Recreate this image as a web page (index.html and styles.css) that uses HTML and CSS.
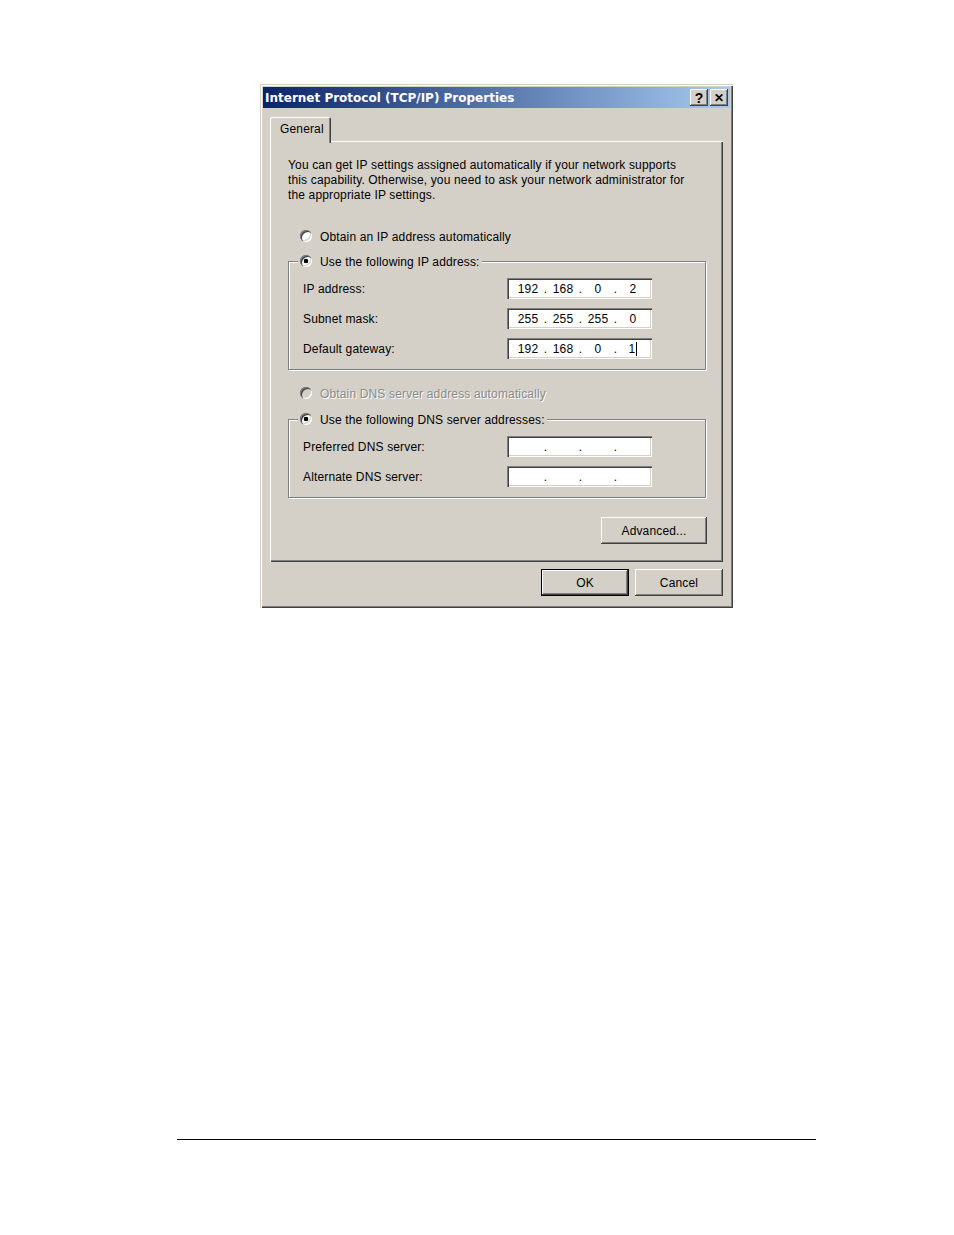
FILE: index.html
```html
<!DOCTYPE html>
<html>
<head>
<meta charset="utf-8">
<link rel="stylesheet" href="styles.css">
</head>
<body>
<div class="page">
  <div class="dialog">
    <div class="titlebar">
      <span class="title">Internet Protocol (TCP/IP) Properties</span>
      <div class="tbtns">
        <span class="tbtn">?</span>
        <span class="tbtn tclose">&#x2715;</span>
      </div>
    </div>
    <div class="body">
      <div class="tabs"><span class="tab">General</span></div>
      <div class="panel">
        <p class="intro">You can get IP settings assigned automatically if your network supports this capability. Otherwise, you need to ask your network administrator for the appropriate IP settings.</p>
        <div class="radiorow r1"><span class="radio"></span><span class="rtext">Obtain an IP address automatically</span></div>
        <fieldset class="group g1">
          <legend><span class="radiorow"><span class="radio on"></span><span class="rtext">Use the following IP address:</span></span></legend>
          <div class="row"><span class="lbl">IP address:</span><span class="ipbox"><span class="oct">192</span><span class="dot">.</span><span class="oct">168</span><span class="dot">.</span><span class="oct">0</span><span class="dot">.</span><span class="oct">2</span></span></div>
          <div class="row"><span class="lbl">Subnet mask:</span><span class="ipbox"><span class="oct">255</span><span class="dot">.</span><span class="oct">255</span><span class="dot">.</span><span class="oct">255</span><span class="dot">.</span><span class="oct">0</span></span></div>
          <div class="row"><span class="lbl">Default gateway:</span><span class="ipbox"><span class="oct">192</span><span class="dot">.</span><span class="oct">168</span><span class="dot">.</span><span class="oct">0</span><span class="dot">.</span><span class="oct">1<span class="caret"></span></span></span></div>
        </fieldset>
        <div class="radiorow r3 disabled"><span class="radio dis"></span><span class="rtext">Obtain DNS server address automatically</span></div>
        <fieldset class="group g2">
          <legend><span class="radiorow"><span class="radio on"></span><span class="rtext">Use the following DNS server addresses:</span></span></legend>
          <div class="row"><span class="lbl">Preferred DNS server:</span><span class="ipbox"><span class="oct"></span><span class="dot">.</span><span class="oct"></span><span class="dot">.</span><span class="oct"></span><span class="dot">.</span><span class="oct"></span></span></div>
          <div class="row"><span class="lbl">Alternate DNS server:</span><span class="ipbox"><span class="oct"></span><span class="dot">.</span><span class="oct"></span><span class="dot">.</span><span class="oct"></span><span class="dot">.</span><span class="oct"></span></span></div>
        </fieldset>
        <div class="advrow"><span class="btn adv">Advanced...</span></div>
      </div>
      <div class="btnrow">
        <span class="btn ok">OK</span>
        <span class="btn cancel">Cancel</span>
      </div>
    </div>
  </div>
  <div class="rule"></div>
</div>
</body>
</html>
```

FILE: styles.css
```css
html, body { margin: 0; padding: 0; background: #fff; }
.page { padding-top: 84px; height: 1151px; }
.dialog {
  margin-left: 260px;
  width: 473px;
  height: 524px;
  box-sizing: border-box;
  padding: 3px;
  background: #d4d0c8;
  box-shadow: inset 1px 1px 0 #d4d0c8, inset 2px 2px 0 #fff, inset -1px -1px 0 #404040, inset -2px -2px 0 #808080;
  font-family: "Liberation Sans", Arial, sans-serif;
  font-size: 12px;
  letter-spacing: 0.15px;
  color: #000;
}
.titlebar {
  height: 21px;
  display: flex;
  align-items: center;
  justify-content: space-between;
  background: linear-gradient(to right, #0a246a, #a6caf0);
  padding-left: 2px;
  padding-right: 2px;
}
.title { color: #fff; font-weight: bold; font-family: "DejaVu Sans", sans-serif; font-size: 12px; letter-spacing: 0; padding-top: 1px; }
.tbtns { display: flex; gap: 2px; }
.tbtn {
  width: 18px; height: 17px;
  background: #d4d0c8;
  box-shadow: inset -1px -1px 0 #404040, inset 1px 1px 0 #fff, inset -2px -2px 0 #808080;
  display: flex; align-items: center; justify-content: center;
  font-weight: bold; font-size: 14px; line-height: 1;
}
.tclose { font-size: 12px; }
.body { padding: 9px 7px 0 7px; }
.tabs { display: flex; height: 24px; }
.tab {
  position: relative; z-index: 1;
  width: 61px; height: 26px; box-sizing: border-box;
  padding-top: 5px; padding-left: 10px;
  background: #d4d0c8;
  border-radius: 2px 2px 0 0;
  box-shadow: inset 1px 1px 0 #fff, inset -1px 0 0 #404040, inset -2px 0 0 #808080;
}
.panel {
  height: 421px;
  box-sizing: border-box;
  padding: 17px 17px 0 18px;
  box-shadow: inset 1px 1px 0 #fff, inset -1px -1px 0 #404040, inset -2px -2px 0 #808080;
}
.intro { margin: 0; line-height: 15px; width: 400px; }
.radiorow { display: flex; align-items: center; gap: 8px; height: 16px; }
.rtext { padding-top: 2px; }
.r1 { margin-top: 25px; padding-left: 12px; }
.r3 { margin-top: 15px; padding-left: 12px; }
.disabled { color: #8a8a8a; text-shadow: 1px 1px 0 #fff; }
.radio {
  flex: none;
  width: 12px; height: 12px; border-radius: 50%;
  background: #fff;
  box-shadow: inset 1px 1px 0 #808080, inset 2px 2px 0 #404040, inset -1px -1px 0 #fff, inset -2px -2px 0 #d4d0c8;
}
.radio.on { background: radial-gradient(circle, #000 0 2px, #fff 2.6px); }
.radio.dis { background: #d4d0c8; }
.group {
  margin: 0;
  padding: 0 0 9px 9px;
  border: 1px solid #808080;
  box-shadow: 1px 1px 0 #fff, inset 1px 1px 0 #fff;
  min-inline-size: 0;
}
.g1 { margin-top: 9px; height: 117px; box-sizing: border-box; }
.g2 { margin-top: 10px; height: 87px; box-sizing: border-box; }
.group legend { padding: 0 2px; background: #d4d0c8; }
.row { display: flex; align-items: center; height: 21px; padding-left: 5px; margin-top: 9px; }
.lbl { width: 204px; }
.ipbox {
  width: 145px; height: 21px; box-sizing: border-box;
  background: #fff;
  box-shadow: inset 1px 1px 0 #808080, inset 2px 2px 0 #404040, inset -1px -1px 0 #fff, inset -2px -2px 0 #d4d0c8;
  display: flex; align-items: center; padding-left: 9px;
}
.oct { width: 24px; text-align: center; }
.dot { width: 11px; text-align: center; }
.caret { display: inline-block; width: 1px; height: 14px; background: #000; vertical-align: -3px; margin-left: 1px; }
.advrow { display: flex; justify-content: flex-end; margin-top: 19px; margin-right: -1px; }
.btn {
  display: flex; align-items: center; justify-content: center;
  height: 27px; box-sizing: border-box;
  background: #d4d0c8;
  box-shadow: inset -1px -1px 0 #404040, inset 1px 1px 0 #fff, inset -2px -2px 0 #808080;
}
.adv { width: 106px; }
.btnrow { display: flex; justify-content: flex-end; gap: 6px; margin-top: 7px; }
.ok { width: 88px; border: 1px solid #000; }
.cancel { width: 88px; }
.rule { margin-top: 531px; margin-left: 177px; width: 639px; height: 1px; background: #000; }
```
